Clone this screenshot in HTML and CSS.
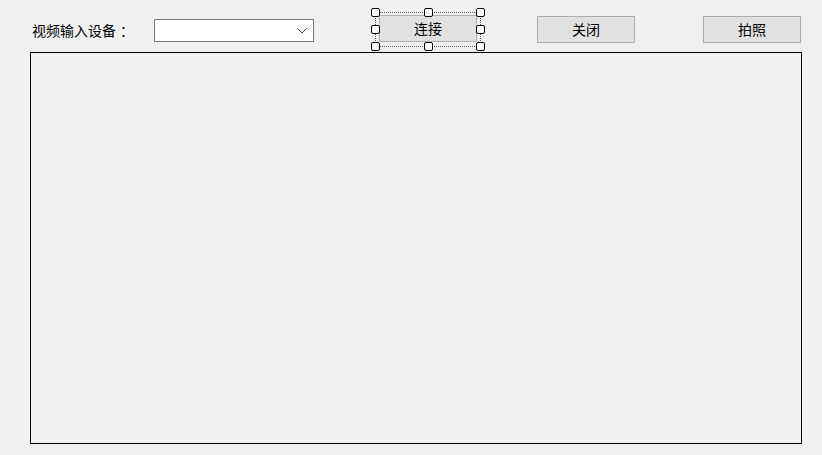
FILE: index.html
```html
<!DOCTYPE html>
<html lang="zh">
<head>
<meta charset="utf-8">
<title>视频</title>
<link rel="stylesheet" href="styles.css">
</head>
<body>
<div class="app">
  <div class="toolbar">
    <span class="label">视频输入设备<span class="colon">：</span></span>
    <div class="combo">
      <svg class="chev" width="10" height="6" viewBox="0 0 10 6"><path d="M0.5 0.5 L5 5 L9.5 0.5" fill="none" stroke="#444" stroke-width="1"/></svg>
    </div>
    <div class="selected">
      <button class="btn">连接</button>
      <span class="handle h-tl"></span>
      <span class="handle h-tm"></span>
      <span class="handle h-tr"></span>
      <span class="handle h-ml"></span>
      <span class="handle h-mr"></span>
      <span class="handle h-bl"></span>
      <span class="handle h-bm"></span>
      <span class="handle h-br"></span>
    </div>
    <button class="btn btn-close">关闭</button>
    <button class="btn btn-photo">拍照</button>
  </div>
  <div class="panel"></div>
</div>
</body>
</html>
```
FILE: styles.css
```css
html, body {
  margin: 0;
  padding: 0;
  background: #f0f0f0;
}
body {
  font-family: "Noto Sans CJK SC", "Noto Sans", sans-serif;
  font-size: 14px;
  color: #000;
}
.app {
  padding: 0 20px 0 30px;
  width: 822px;
  height: 455px;
  box-sizing: border-box;
}
.toolbar {
  display: flex;
  align-items: flex-start;
  height: 52px;
}
.label {
  margin: 21px 0 0 2px;
  line-height: 18px;
  width: 98px;
  white-space: nowrap;
}
.colon {
  padding-left: 4px;
}
.combo {
  margin: 19px 0 0 24px;
  width: 160px;
  height: 23px;
  box-sizing: border-box;
  border: 1px solid #7a7a7a;
  background: #fff;
  display: flex;
  align-items: center;
  justify-content: flex-end;
  padding-right: 6px;
}
.chev { display: block; }
.selected {
  position: relative;
  margin: 12px 0 0 61px;
  width: 106px;
  height: 35px;
  box-sizing: border-box;
  border: 1px dotted #555;
  padding: 2px 3px;
}
.btn {
  width: 98px;
  height: 27px;
  box-sizing: border-box;
  border: 1px solid #adadad;
  background: #e1e1e1;
  font-family: "Noto Sans CJK SC", "Noto Sans", sans-serif;
  font-size: 14px;
  line-height: 18px;
  color: #000;
  padding: 0 0 2px 0;
  margin: 0;
  display: block;
}
.btn-close { margin: 16px 0 0 56px; }
.btn-photo { margin: 16px 0 0 68px; }
.handle {
  position: absolute;
  width: 9px;
  height: 9px;
  box-sizing: border-box;
  border: 1px solid #000;
  border-radius: 2px;
  background: #fff;
}
.h-tl { left: -5px; top: -5px; }
.h-tm { left: 48px; top: -5px; }
.h-tr { left: 100px; top: -5px; }
.h-ml { left: -5px; top: 12px; }
.h-mr { left: 100px; top: 12px; }
.h-bl { left: -5px; top: 29px; }
.h-bm { left: 48px; top: 29px; }
.h-br { left: 100px; top: 29px; }
.panel {
  width: 772px;
  height: 392px;
  box-sizing: border-box;
  border: 1px solid #000;
}
```
